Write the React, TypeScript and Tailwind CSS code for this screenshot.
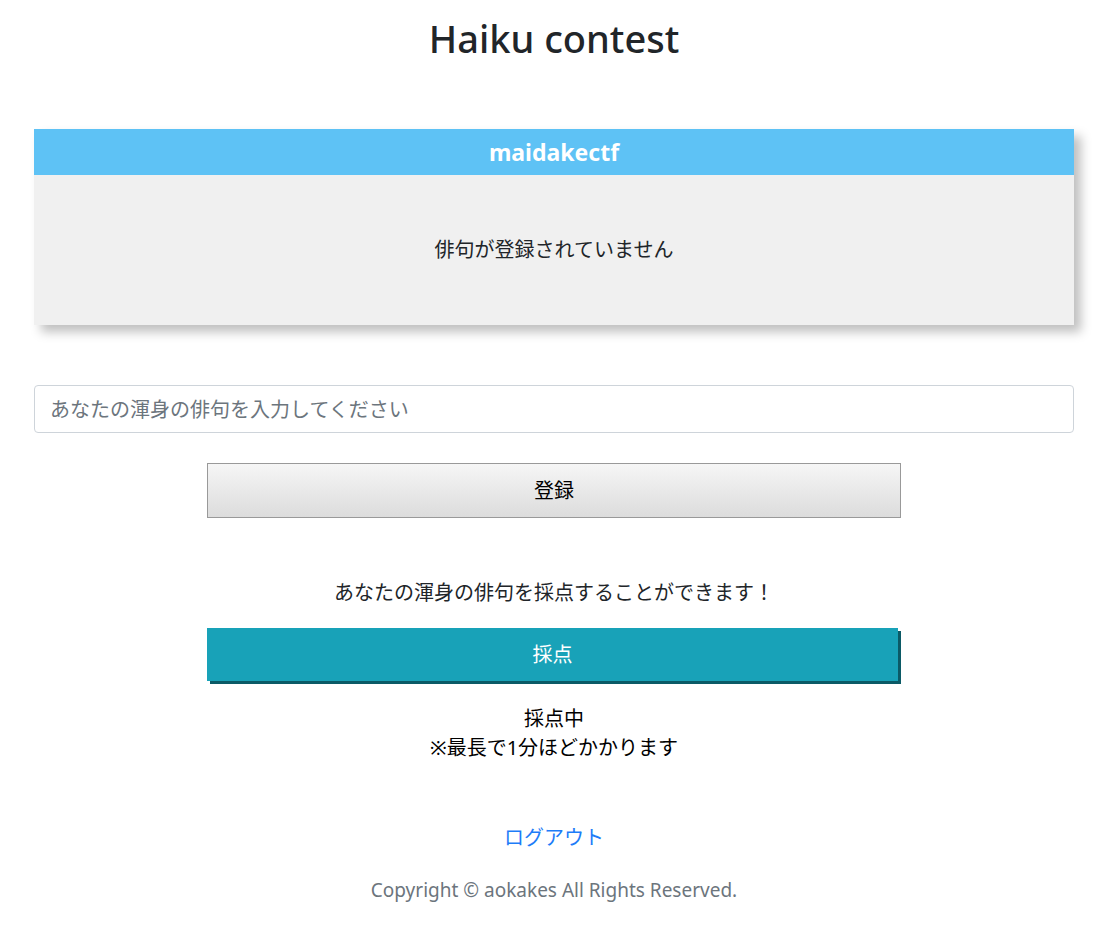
export default function App() {
  return (
    <div
      className="min-h-[932px] bg-white pl-[34px] pr-[38px] text-[#212529]"
      style={{ fontFamily: '"Noto Sans", "Noto Sans CJK JP", sans-serif' }}
    >
      <h1 className="pt-[14px] text-center text-[38px] font-medium leading-[48px]">
        Haiku contest
      </h1>

      <div className="mt-[67px] shadow-[7px_7px_10px_rgba(0,0,0,0.25)]">
        <div className="flex h-[46px] items-center justify-center bg-[#5ec2f5] text-[23px] font-bold text-white">
          maidakectf
        </div>
        <div className="flex h-[150px] items-center justify-center bg-[#f0f0f0] text-[20px]">
          俳句が登録されていません
        </div>
      </div>

      <input
        type="text"
        placeholder="あなたの渾身の俳句を入力してください"
        className="mt-[60px] block h-[48px] w-full rounded-[4px] border border-[#ced4da] px-[15px] text-[20px] placeholder:text-[#6c757d] focus:outline-none"
      />

      <div className="mx-auto mt-[30px] w-[694px]">
        <button className="flex h-[55px] w-full items-center justify-center border border-[#999] bg-gradient-to-b from-[#f6f6f6] to-[#dcdcdc] text-[20px] text-black">
          登録
        </button>
      </div>

      <p className="mt-[60px] text-center text-[20px] leading-[30px]">
        あなたの渾身の俳句を採点することができます！
      </p>

      <div className="mx-auto mt-[20px] w-[694px]">
        <button className="flex h-[53px] w-[691px] items-center justify-center bg-[#18a2b8] text-[20px] text-white shadow-[3px_3px_0_#0b5a66]">
          採点
        </button>
      </div>

      <div className="mt-[23px] text-center text-[20px] leading-[29px] text-black">
        <p>採点中</p>
        <p>※最長で1分ほどかかります</p>
      </div>

      <div className="mt-[61px] text-center text-[20px] leading-[30px]">
        <a href="#" className="text-[#1e7cf8]">
          ログアウト
        </a>
      </div>

      <p className="mt-[22px] text-center text-[19px] leading-[30px] text-[#6c757d]">
        Copyright © aokakes All Rights Reserved.
      </p>
    </div>
  );
}
